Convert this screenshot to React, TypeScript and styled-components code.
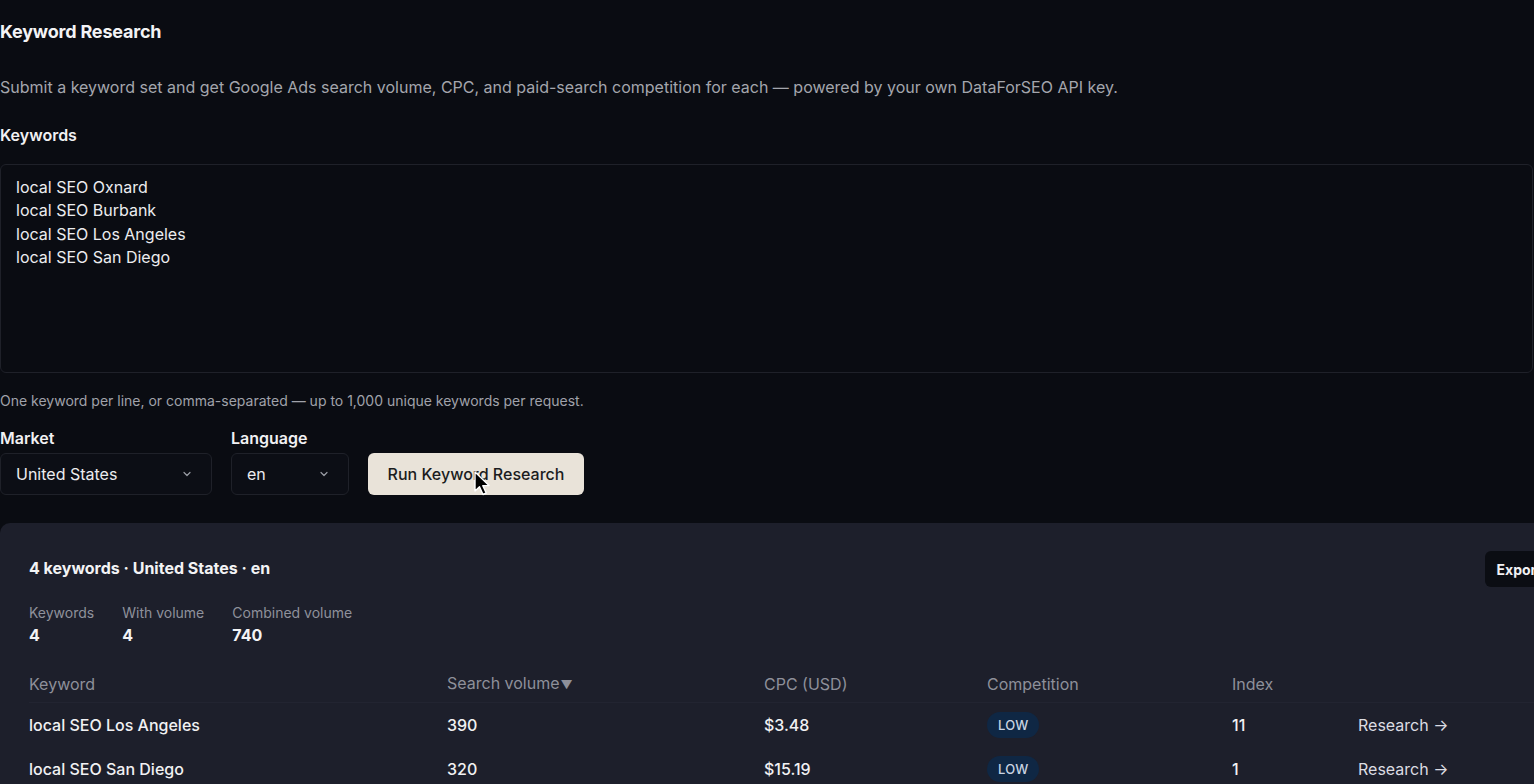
import React from "react";
import styled, { createGlobalStyle } from "styled-components";

const GlobalStyle = createGlobalStyle`
  html, body {
    margin: 0;
    padding: 0;
    background: #0a0c12;
    overflow: hidden;
  }
  body {
    font-family: Inter, "Liberation Sans", Arial, sans-serif;
    color: #f1f1f3;
    -webkit-font-smoothing: antialiased;
  }
`;

interface Row {
  keyword: string;
  volume: number;
  cpc: string;
  competition: string;
  index: number;
}

const rows: Row[] = [
  { keyword: "local SEO Los Angeles", volume: 390, cpc: "$3.48", competition: "LOW", index: 11 },
  { keyword: "local SEO San Diego", volume: 320, cpc: "$15.19", competition: "LOW", index: 1 },
];

const keywords = [
  "local SEO Oxnard",
  "local SEO Burbank",
  "local SEO Los Angeles",
  "local SEO San Diego",
].join("\n");

const Chevron = () => (
  <svg width="12" height="12" viewBox="0 0 24 24" fill="none" stroke="#9a9ca4" strokeWidth="2.4" strokeLinecap="round" strokeLinejoin="round">
    <path d="m6 9 6 6 6-6" />
  </svg>
);

const Cursor = () => (
  <svg width="20" height="26" viewBox="0 0 20 26">
    <path d="M2 1 L2 20 L6.5 15.8 L10 23.5 L13.2 22 L9.8 14.6 L16 14.6 Z" fill="#000" stroke="#fff" strokeWidth="1.4" strokeLinejoin="round" />
  </svg>
);

const App: React.FC = () => {
  return (
    <Page>
      <GlobalStyle />
      <Title>Keyword Research</Title>
      <Description>
        Submit a keyword set and get Google Ads search volume, CPC, and paid-search competition for each — powered by
        your own DataForSEO API key.
      </Description>

      <FieldLabel>Keywords</FieldLabel>
      <KeywordBox defaultValue={keywords} spellCheck={false} />
      <Hint>One keyword per line, or comma-separated — up to 1,000 unique keywords per request.</Hint>

      <Controls>
        <Field>
          <SmallLabel>Market</SmallLabel>
          <Select width={212}>
            <span>United States</span>
            <Chevron />
          </Select>
        </Field>
        <Field>
          <SmallLabel>Language</SmallLabel>
          <Select width={118}>
            <span>en</span>
            <Chevron />
          </Select>
        </Field>
        <RunButton>
          Run Keyword Research
          <CursorWrap>
            <Cursor />
          </CursorWrap>
        </RunButton>
      </Controls>

      <Results>
        <ResultsHeader>
          <ResultsTitle>4 keywords · United States · en</ResultsTitle>
          <ExportButton>Export CSV</ExportButton>
        </ResultsHeader>

        <Stats>
          <Stat>
            <StatLabel>Keywords</StatLabel>
            <StatValue>4</StatValue>
          </Stat>
          <Stat>
            <StatLabel>With volume</StatLabel>
            <StatValue>4</StatValue>
          </Stat>
          <Stat>
            <StatLabel>Combined volume</StatLabel>
            <StatValue>740</StatValue>
          </Stat>
        </Stats>

        <Table>
          <colgroup>
            <col style={{ width: 418 }} />
            <col style={{ width: 317 }} />
            <col style={{ width: 223 }} />
            <col style={{ width: 245 }} />
            <col style={{ width: 126 }} />
            <col />
          </colgroup>
          <thead>
            <tr>
              <Th>Keyword</Th>
              <Th>
                Search volume<SortMark>▼</SortMark>
              </Th>
              <Th>CPC (USD)</Th>
              <Th>Competition</Th>
              <Th>Index</Th>
              <Th />
            </tr>
          </thead>
          <tbody>
            {rows.map((r) => (
              <tr key={r.keyword}>
                <Td>{r.keyword}</Td>
                <Td>{r.volume}</Td>
                <Td>{r.cpc}</Td>
                <Td>
                  <Badge>{r.competition}</Badge>
                </Td>
                <Td>{r.index}</Td>
                <Td>
                  <ResearchLink>Research →</ResearchLink>
                </Td>
              </tr>
            ))}
          </tbody>
        </Table>
      </Results>
    </Page>
  );
};

export default App;

const Page = styled.main`
  width: 1617px;
  padding-top: 20px;
  display: flex;
  flex-direction: column;
  align-items: flex-start;
`;

const Title = styled.h1`
  margin: 0;
  font-size: 18px;
  line-height: 24px;
  font-weight: 700;
  letter-spacing: -0.2px;
  color: #f3f3f5;
`;

const Description = styled.p`
  margin: 31px 0 0;
  font-size: 16px;
  line-height: 24px;
  color: #a4a6ad;
`;

const FieldLabel = styled.label`
  margin-top: 24px;
  font-size: 16px;
  line-height: 24px;
  font-weight: 600;
  color: #f1f1f3;
`;

const KeywordBox = styled.textarea`
  margin-top: 17px;
  width: 1533px;
  height: 209px;
  box-sizing: border-box;
  padding: 11px 15px;
  background: #0a0c12;
  border: 1px solid #1f2129;
  border-radius: 6px;
  color: #ececef;
  font-family: inherit;
  font-size: 16px;
  line-height: 23.3px;
  resize: none;
  outline: none;
`;

const Hint = styled.div`
  margin-top: 18px;
  font-size: 14px;
  line-height: 20px;
  color: #a0a2aa;
`;

const Controls = styled.div`
  margin-top: 17px;
  display: flex;
  align-items: flex-end;
  gap: 19px;
`;

const Field = styled.div`
  display: flex;
  flex-direction: column;
  gap: 5px;
`;

const SmallLabel = styled.span`
  font-size: 16px;
  line-height: 20px;
  font-weight: 600;
  color: #f1f1f3;
`;

const Select = styled.div<{ width: number }>`
  width: ${(p) => p.width}px;
  height: 42px;
  box-sizing: border-box;
  padding: 0 18px 0 15px;
  display: flex;
  align-items: center;
  justify-content: space-between;
  background: #0c0e15;
  border: 1px solid #1f2129;
  border-radius: 6px;
  font-size: 16px;
  color: #ececef;
`;

const RunButton = styled.button`
  position: relative;
  height: 42px;
  width: 216px;
  border: none;
  border-radius: 6px;
  background: #e9e3d9;
  color: #1b1c20;
  font-family: inherit;
  font-size: 16px;
  font-weight: 500;
  cursor: pointer;
`;

const CursorWrap = styled.span`
  position: absolute;
  left: 105px;
  top: 18px;
  line-height: 0;
`;

const Results = styled.section`
  margin-top: 28px;
  width: 100%;
  box-sizing: border-box;
  padding: 28px 28px 20px 29px;
  background: #1d1f2b;
  border-radius: 10px;
`;

const ResultsHeader = styled.div`
  display: flex;
  align-items: center;
  justify-content: space-between;
`;

const ResultsTitle = styled.h2`
  margin: 0 0 2px;
  font-size: 16px;
  line-height: 20px;
  font-weight: 700;
  color: #f3f3f5;
`;

const ExportButton = styled.button`
  height: 36px;
  padding: 0 14px 0 12px;
  border: none;
  border-radius: 6px;
  background: #0b0d13;
  color: #f1f1f3;
  font-family: inherit;
  font-size: 14px;
  font-weight: 700;
`;

const Stats = styled.div`
  margin-top: 17px;
  display: flex;
  gap: 28px;
`;

const Stat = styled.div`
  display: flex;
  flex-direction: column;
  gap: 3px;
`;

const StatLabel = styled.span`
  font-size: 14px;
  line-height: 18px;
  color: #8f919b;
`;

const StatValue = styled.span`
  font-size: 16px;
  line-height: 20px;
  font-weight: 700;
  color: #f3f3f5;
`;

const Table = styled.table`
  margin-top: 21px;
  border-collapse: collapse;
  table-layout: fixed;
  width: 100%;
`;

const Th = styled.th`
  height: 36px;
  padding: 0;
  vertical-align: middle;
  text-align: left;
  font-size: 16px;
  line-height: 24px;
  font-weight: 400;
  color: #8e909a;
  border-bottom: 1px solid #222431;
`;

const SortMark = styled.span`
  font-size: 12px;
  margin-left: 1px;
`;

const Td = styled.td`
  height: 44px;
  padding: 0;
  vertical-align: middle;
  font-size: 16px;
  line-height: 24px;
  font-weight: 500;
  color: #f1f1f3;
`;

const Badge = styled.span`
  display: inline-block;
  vertical-align: middle;
  height: 26px;
  line-height: 26px;
  padding: 0 11px;
  border-radius: 13px;
  background: #0f2744;
  color: #c9d4e2;
  font-size: 13px;
  font-weight: 500;
  letter-spacing: 0.2px;
`;

const ResearchLink = styled.a`
  color: #dcdce2;
  font-weight: 400;
  text-decoration: none;
  cursor: pointer;
`;
